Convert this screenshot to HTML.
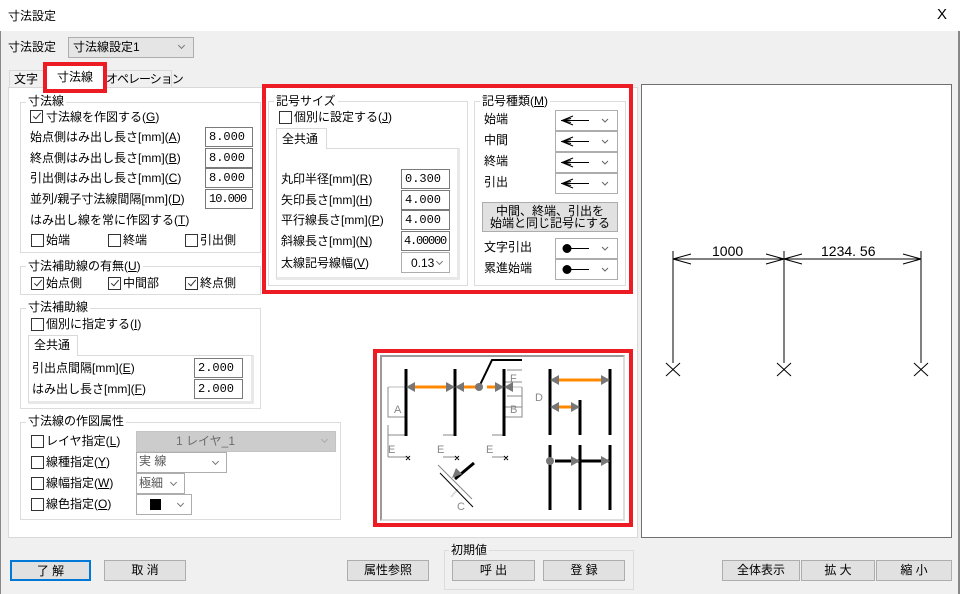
<!DOCTYPE html>
<html><head><meta charset="utf-8"><style>
*{box-sizing:border-box;margin:0;padding:0}
body{width:960px;height:594px;overflow:hidden;background:#f0f0f0;font-family:"Liberation Sans","Noto Sans CJK JP",sans-serif;font-size:12px;color:#000;position:relative}
div,span{position:absolute}
.t{white-space:nowrap;line-height:14px}
.in{background:#fff;border:1px solid #7a7a7a;font-family:"Liberation Mono","Noto Sans CJK JP",monospace;font-size:12px;line-height:18px;padding-left:3px;height:20px;overflow:hidden;white-space:nowrap}
.cb{width:13px;height:13px;border:1px solid #333;background:#fff}
.ck{width:4px;height:8px;border-right:1.5px solid #333;border-bottom:1.5px solid #333;transform:rotate(40deg)}
.grp{border:1px solid #dcdcdc}
.gt{background:#fff;padding:0 2px;line-height:14px;white-space:nowrap}
.btn{background:#e1e1e1;border:1px solid #adadad;text-align:center;line-height:18px;height:20px}
.cmb{background:#fff;border:1px solid #adadad;height:21px}
.ar{width:5px;height:5px;border-right:1px solid #777;border-bottom:1px solid #777;transform:rotate(45deg)}
.red{border:4px solid #ed1c24}
</style></head><body>
<div style="left:0;top:0;width:960px;height:31px;background:#fff"></div>
<div class="t" style="left:8px;top:9px">寸法設定</div>
<div class="t" style="left:937px;top:8px;font-size:15px">X</div>
<div style="left:0;top:31px;width:1px;height:563px;background:#888"></div>
<div style="left:958px;top:31px;width:2px;height:563px;background:#888"></div>

<div class="t" style="left:8px;top:40px">寸法設定</div>
<div style="left:68px;top:37px;width:126px;height:21px;background:#e5e5e5;border:1px solid #adadad"></div>
<div class="t" style="left:73px;top:40px">寸法線設定1</div>
<div class="ar" style="left:179px;top:43px"></div>

<div style="left:9px;top:70px;width:37px;height:18px;border:1px solid #d9d9d9;border-bottom:none;background:#f0f0f0"></div>
<div class="t" style="left:14px;top:72px">文字</div>
<div style="left:104px;top:70px;width:68px;height:18px;border:1px solid #d9d9d9;border-bottom:none;background:#f0f0f0"></div>
<div class="t" style="left:106px;top:72px;letter-spacing:-1px">オペレーション</div>
<div style="left:8px;top:87px;width:630px;height:451px;background:#fff;border:1px solid #d9d9d9"></div>
<div style="left:47px;top:66px;width:56px;height:23px;background:#fff"></div>
<div class="red" style="left:43px;top:62px;width:64px;height:31px"></div>
<div class="t" style="left:57px;top:70px">寸法線</div>

<div class="grp" style="left:20px;top:102px;width:241px;height:151px"></div>
<div class="gt" style="left:26px;top:94px">寸法線</div>
<div class="cb" style="left:30px;top:110px"></div><div class="ck" style="left:35px;top:111px"></div>
<div class="t" style="left:46px;top:110px">寸法線を作図する(<u>G</u>)</div>
<div class="t" style="left:30px;top:130px">始点側はみ出し長さ[mm](<u>A</u>)</div>
<div class="in" style="left:205px;top:127px;width:48px">8.000</div>
<div class="t" style="left:30px;top:151px">終点側はみ出し長さ[mm](<u>B</u>)</div>
<div class="in" style="left:205px;top:148px;width:48px">8.000</div>
<div class="t" style="left:30px;top:171px">引出側はみ出し長さ[mm](<u>C</u>)</div>
<div class="in" style="left:205px;top:168px;width:48px">8.000</div>
<div class="t" style="left:30px;top:192px">並列/親子寸法線間隔[mm](<u>D</u>)</div>
<div class="in" style="left:205px;top:189px;width:48px;letter-spacing:-1px">10.000</div>
<div class="t" style="left:30px;top:213px">はみ出し線を常に作図する(<u>T</u>)</div>
<div class="cb" style="left:31px;top:234px"></div><div class="t" style="left:46px;top:233px">始端</div>
<div class="cb" style="left:108px;top:234px"></div><div class="t" style="left:123px;top:233px">終端</div>
<div class="cb" style="left:185px;top:234px"></div><div class="t" style="left:200px;top:233px">引出側</div>

<div class="grp" style="left:20px;top:266px;width:241px;height:29px"></div>
<div class="gt" style="left:26px;top:259px">寸法補助線の有無(<u>U</u>)</div>
<div class="cb" style="left:31px;top:277px"></div><div class="ck" style="left:36px;top:278px"></div><div class="t" style="left:46px;top:276px">始点側</div>
<div class="cb" style="left:108px;top:277px"></div><div class="ck" style="left:113px;top:278px"></div><div class="t" style="left:123px;top:276px">中間部</div>
<div class="cb" style="left:185px;top:277px"></div><div class="ck" style="left:190px;top:278px"></div><div class="t" style="left:200px;top:276px">終点側</div>

<div class="grp" style="left:20px;top:308px;width:241px;height:101px"></div>
<div class="gt" style="left:26px;top:300px">寸法補助線</div>
<div class="cb" style="left:31px;top:318px"></div><div class="t" style="left:46px;top:317px">個別に指定する(<u>I</u>)</div>
<div style="left:28px;top:355px;width:226px;height:49px;border:1px solid #d9d9d9;border-right:3px solid #e8e8e8;border-bottom:3px solid #e8e8e8"></div>
<div style="left:28px;top:335px;width:50px;height:21px;border:1px solid #d9d9d9;border-bottom:none;background:#fff"></div>
<div class="t" style="left:34px;top:338px">全共通</div>
<div class="t" style="left:32px;top:361px">引出点間隔[mm](<u>E</u>)</div>
<div class="in" style="left:194px;top:358px;width:49px">2.000</div>
<div class="t" style="left:32px;top:382px">はみ出し長さ[mm](<u>F</u>)</div>
<div class="in" style="left:194px;top:379px;width:49px">2.000</div>

<div class="grp" style="left:20px;top:422px;width:321px;height:98px"></div>
<div class="gt" style="left:26px;top:414px">寸法線の作図属性</div>
<div class="cb" style="left:31px;top:435px"></div><div class="t" style="left:46px;top:434px">レイヤ指定(<u>L</u>)</div>
<div style="left:136px;top:431px;width:200px;height:21px;background:#cccccc;border:1px solid #c4c4c4"></div>
<div class="t" style="left:176px;top:434px;color:#6d6d6d">1 レイヤ_1</div><div class="ar" style="left:322px;top:437px;border-color:#aaa"></div>
<div class="cb" style="left:31px;top:456px"></div><div class="t" style="left:46px;top:455px">線種指定(<u>Y</u>)</div>
<div class="cmb" style="left:136px;top:452px;width:91px"></div><div class="t" style="left:139px;top:454px;color:#555">実 線</div><div class="ar" style="left:213px;top:459px"></div>
<div class="cb" style="left:31px;top:477px"></div><div class="t" style="left:46px;top:476px">線幅指定(<u>W</u>)</div>
<div class="cmb" style="left:136px;top:473px;width:49px"></div><div class="t" style="left:139px;top:476px;color:#555">極細</div><div class="ar" style="left:171px;top:480px"></div>
<div class="cb" style="left:31px;top:498px"></div><div class="t" style="left:46px;top:497px">線色指定(<u>O</u>)</div>
<div class="cmb" style="left:136px;top:494px;width:56px"></div><div style="left:150px;top:499px;width:11px;height:11px;background:#000"></div><div class="ar" style="left:178px;top:501px"></div>

<div class="grp" style="left:268px;top:101px;width:200px;height:185px"></div>
<div class="gt" style="left:274px;top:94px">記号サイズ</div>
<div class="cb" style="left:279px;top:111px"></div><div class="t" style="left:294px;top:110px">個別に設定する(<u>J</u>)</div>
<div style="left:276px;top:148px;width:184px;height:132px;border:1px solid #d9d9d9;border-right:3px solid #e8e8e8;border-bottom:3px solid #e8e8e8"></div>
<div style="left:276px;top:128px;width:51px;height:21px;border:1px solid #d9d9d9;border-bottom:none;background:#fff"></div>
<div class="t" style="left:282px;top:132px">全共通</div>
<div class="t" style="left:281px;top:172px">丸印半径[mm](<u>R</u>)</div>
<div class="in" style="left:401px;top:169px;width:49px">0.300</div>
<div class="t" style="left:281px;top:193px">矢印長さ[mm](<u>H</u>)</div>
<div class="in" style="left:401px;top:190px;width:49px">4.000</div>
<div class="t" style="left:281px;top:213px">平行線長さ[mm](<u>P</u>)</div>
<div class="in" style="left:401px;top:210px;width:49px">4.000</div>
<div class="t" style="left:281px;top:234px">斜線長さ[mm](<u>N</u>)</div>
<div class="in" style="left:401px;top:231px;width:49px;letter-spacing:-1.2px;padding-left:2px">4.00000</div>
<div class="t" style="left:281px;top:256px">太線記号線幅(<u>V</u>)</div>
<div class="cmb" style="left:401px;top:252px;width:49px"></div><div class="t" style="left:411px;top:256px">0.13</div><div class="ar" style="left:437px;top:259px"></div>

<div class="grp" style="left:474px;top:101px;width:152px;height:185px"></div>
<div class="gt" style="left:480px;top:94px">記号種類(<u>M</u>)</div>
<div class="t" style="left:484px;top:112px">始端</div>
<div class="t" style="left:484px;top:133px">中間</div>
<div class="t" style="left:484px;top:154px">終端</div>
<div class="t" style="left:484px;top:175px">引出</div>
<div class="cmb" style="left:555px;top:110px;width:63px"></div>
<div class="cmb" style="left:555px;top:131px;width:63px"></div>
<div class="cmb" style="left:555px;top:152px;width:63px"></div>
<div class="cmb" style="left:555px;top:173px;width:63px"></div>
<svg style="position:absolute;left:555px;top:110px" width="63" height="84" fill="none" stroke="#000" stroke-width="1">
<g id="a"><path d="M6 10.5H34M7 10.5L18 6M7 10.5L18 15M7 10.5L16 8.5M7 10.5L16 12.5"/></g>
<use href="#a" y="21"/><use href="#a" y="42"/><use href="#a" y="63"/>
<g stroke="#666"><path d="M47 9l3 3 3-3M47 30l3 3 3-3M47 51l3 3 3-3M47 72l3 3 3-3"/></g></svg>
<div class="btn" style="left:482px;top:202px;width:136px;height:30px;line-height:12px;padding-top:2px;font-size:12px">中間、終端、引出を<br>始端と同じ記号にする</div>
<div class="t" style="left:484px;top:240px">文字引出</div>
<div class="t" style="left:484px;top:261px">累進始端</div>
<div class="cmb" style="left:555px;top:238px;width:63px"></div>
<div class="cmb" style="left:555px;top:259px;width:63px"></div>
<svg style="position:absolute;left:555px;top:238px" width="63" height="42" fill="none" stroke="#000">
<circle cx="12" cy="10.5" r="4" fill="#000"/><path d="M12 10.5H34"/>
<circle cx="12" cy="31.5" r="4" fill="#000"/><path d="M12 31.5H34"/>
<g stroke="#666"><path d="M47 9l3 3 3-3M47 30l3 3 3-3"/></g></svg>
<div class="red" style="left:262px;top:84px;width:371px;height:210px"></div>

<div style="left:380px;top:355px;width:245px;height:166px;background:#fff;border:2px solid #9a9a9a;border-right-color:#ddd;border-bottom-color:#ddd"></div>
<svg style="position:absolute;left:370px;top:345px" width="265" height="185" fill="none">
<g stroke="#ddd" stroke-width="2"><path d="M18 42H36M134 42H152M81 152L88 144"/></g>
<g stroke="#888" stroke-width="1"><path d="M18 42V72H36M152 42V72H134M18 90H36M18 112H36M73 90H85M73 112H85M122 90H134M122 112H134M137 25H152M137 51H152M135 37H152M135 62H152M18 80V112M68 120L102 154"/></g>
<g stroke="#f80" stroke-width="3"><path d="M43 42H80M92 42H106M117 42H128M186 35H238M186 62H205"/></g>
<g stroke="#000" stroke-width="3"><path d="M36 24V91M85 24V91M134 24V91M180 24V90M210 55V90M240 24V90M180 100V165M210 100V165M240 100V165M185 116H240M104 118L85 134"/></g>
<g stroke="#000" stroke-width="2"><path d="M109 42L122 15H152"/></g>
<g stroke="#000" stroke-width="1"><path d="M70 128L103 162"/></g>
<g fill="#777"><path d="M36 42l9-5v10zM85 42l-9-5v10zM85 42l9-5v10zM134 42l-9-5v10zM134 42l9-5v10zM180 35l9-5v10zM240 35l-9-5v10zM180 62l9-5v10zM210 62l-9-5v10zM210 116l-9-5v10zM240 116l-9-5v10zM82 133l4-10 6 6z"/><circle cx="109" cy="42" r="4"/><circle cx="180" cy="116" r="4"/></g>
<g font-size="11" fill="#888" font-family="Liberation Sans"><text x="24" y="68">A</text><text x="140" y="68">B</text><text x="18" y="108">E</text><text x="67" y="108">E</text><text x="116" y="108">E</text><text x="140" y="37">F</text><text x="165" y="56">D</text><text x="87" y="165">C</text></g>
<g stroke="#000" stroke-width="1"><path d="M36 111l4 4M40 111l-4 4M85 111l4 4M89 111l-4 4M134 111l4 4M138 111l-4 4"/></g>
</svg>
<div class="red" style="left:373px;top:349px;width:260px;height:178px"></div>

<div style="left:641px;top:84px;width:311px;height:454px;background:#fff;border:1px solid #707070"></div>
<svg style="position:absolute;left:641px;top:220px" width="311" height="170" fill="none" stroke="#000" stroke-width="1">
<path d="M32 31V143M143 31V143M280 31V143M32 39H280"/>
<path d="M32 39l18-5M32 39l18 5M143 39l-18-5M143 39l-18 5M143 39l18-5M143 39l18 5M280 39l-18-5M280 39l-18 5"/>
<path d="M25 143l14 13M39 143l-14 13M136 143l14 13M150 143l-14 13M273 143l14 13M287 143l-14 13"/>
<text x="71" y="36" font-size="14" fill="#000" stroke="none" font-family="Liberation Sans">1000</text>
<text x="180" y="36" font-size="14" fill="#000" stroke="none" font-family="Liberation Sans">1234. 56</text>
</svg>

<div class="btn" style="left:10px;top:560px;width:81px;height:21px;border:2px solid #0078d7">了 解</div>
<div class="btn" style="left:104px;top:560px;width:82px;height:21px">取 消</div>
<div class="btn" style="left:347px;top:560px;width:82px;height:21px">属性参照</div>
<div class="grp" style="left:444px;top:550px;width:190px;height:40px;border-color:#dcdcdc"></div>
<div class="t" style="left:449px;top:543px;background:#f0f0f0;padding:0 2px">初期値</div>
<div class="btn" style="left:452px;top:560px;width:83px;height:21px">呼 出</div>
<div class="btn" style="left:543px;top:560px;width:82px;height:21px">登 録</div>
<div class="btn" style="left:722px;top:560px;width:78px;height:21px">全体表示</div>
<div class="btn" style="left:801px;top:560px;width:74px;height:21px">拡 大</div>
<div class="btn" style="left:876px;top:560px;width:76px;height:21px">縮 小</div>
</body></html>
